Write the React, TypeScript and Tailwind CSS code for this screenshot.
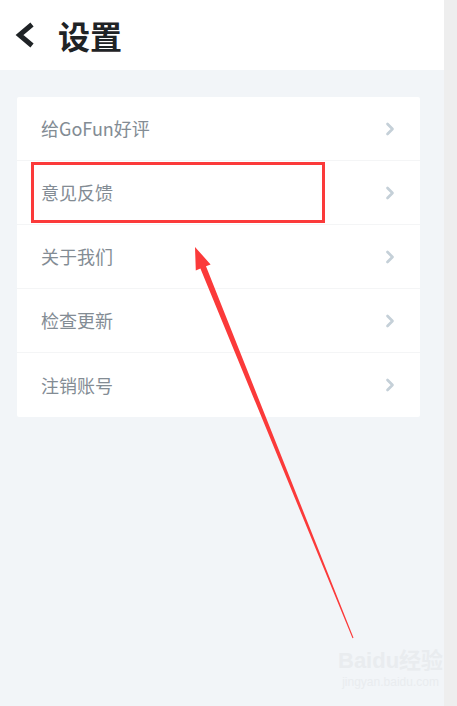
import { ChevronRight } from "lucide-react";

const items = ["给GoFun好评", "意见反馈", "关于我们", "检查更新", "注销账号"];

export default function App() {
  return (
    <div className="relative flex w-[457px] h-[706px] bg-[#eeeeee] font-['Noto_Sans_CJK_SC','Noto_Sans',sans-serif] overflow-hidden">
      <div className="flex flex-col w-[444px] bg-[#f2f5f8]">
        {/* header */}
        <header className="flex items-center h-[70px] bg-white pl-[14px]">
          <svg width="22" height="26" viewBox="0 0 22 26" className="mr-[22px]">
            <polyline
              points="18,2.5 5.5,13 18,23.5"
              fill="none"
              stroke="#1f2326"
              strokeWidth="5"
              strokeLinejoin="miter"
            />
          </svg>
          <h1 className="text-[32px] font-bold text-[#1f2326] leading-none">设置</h1>
        </header>

        {/* list card */}
        <div className="pt-[27px] pl-[17px]">
          <div className="w-[403px] bg-white rounded-[2px]">
            {items.map((t, i) => (
              <div
                key={t}
                className={`flex items-center justify-between h-[64px] pl-[24px] pr-[20px] ${
                  i < items.length - 1 ? "border-b border-[#f4f5f6]" : ""
                }`}
              >
                <span className="text-[18px] text-[#838c94] leading-none -mt-[1px]">{t}</span>
                <ChevronRight className="w-[20px] h-[20px] text-[#c5d0d8]" strokeWidth={3.2} />
              </div>
            ))}
          </div>
        </div>
      </div>
      <div className="flex-1" />

      {/* annotation: highlight box */}
      <div className="absolute left-[31px] top-[162px] w-[294px] h-[61px] border-[3px] border-[#fb3a3a]" />

      {/* annotation: arrow */}
      <svg className="absolute left-0 top-0" width="457" height="706" viewBox="0 0 457 706">
        <polygon
          points="195,247 210.6,264.4 206,266.3 353.5,637.8 352.5,638.2 200.4,268.5 195.8,270.4"
          fill="#fb3a3a"
        />
      </svg>

      {/* watermark */}
      <div className="absolute left-[338px] top-[650px] flex flex-col items-center text-[#e9ecef] font-['Liberation_Sans','Noto_Sans_CJK_SC',sans-serif]">
        <span className="text-[22px] font-bold leading-none">Baidu经验</span>
        <span className="text-[12px] leading-none mt-[4px]">jingyan.baidu.com</span>
      </div>
    </div>
  );
}
